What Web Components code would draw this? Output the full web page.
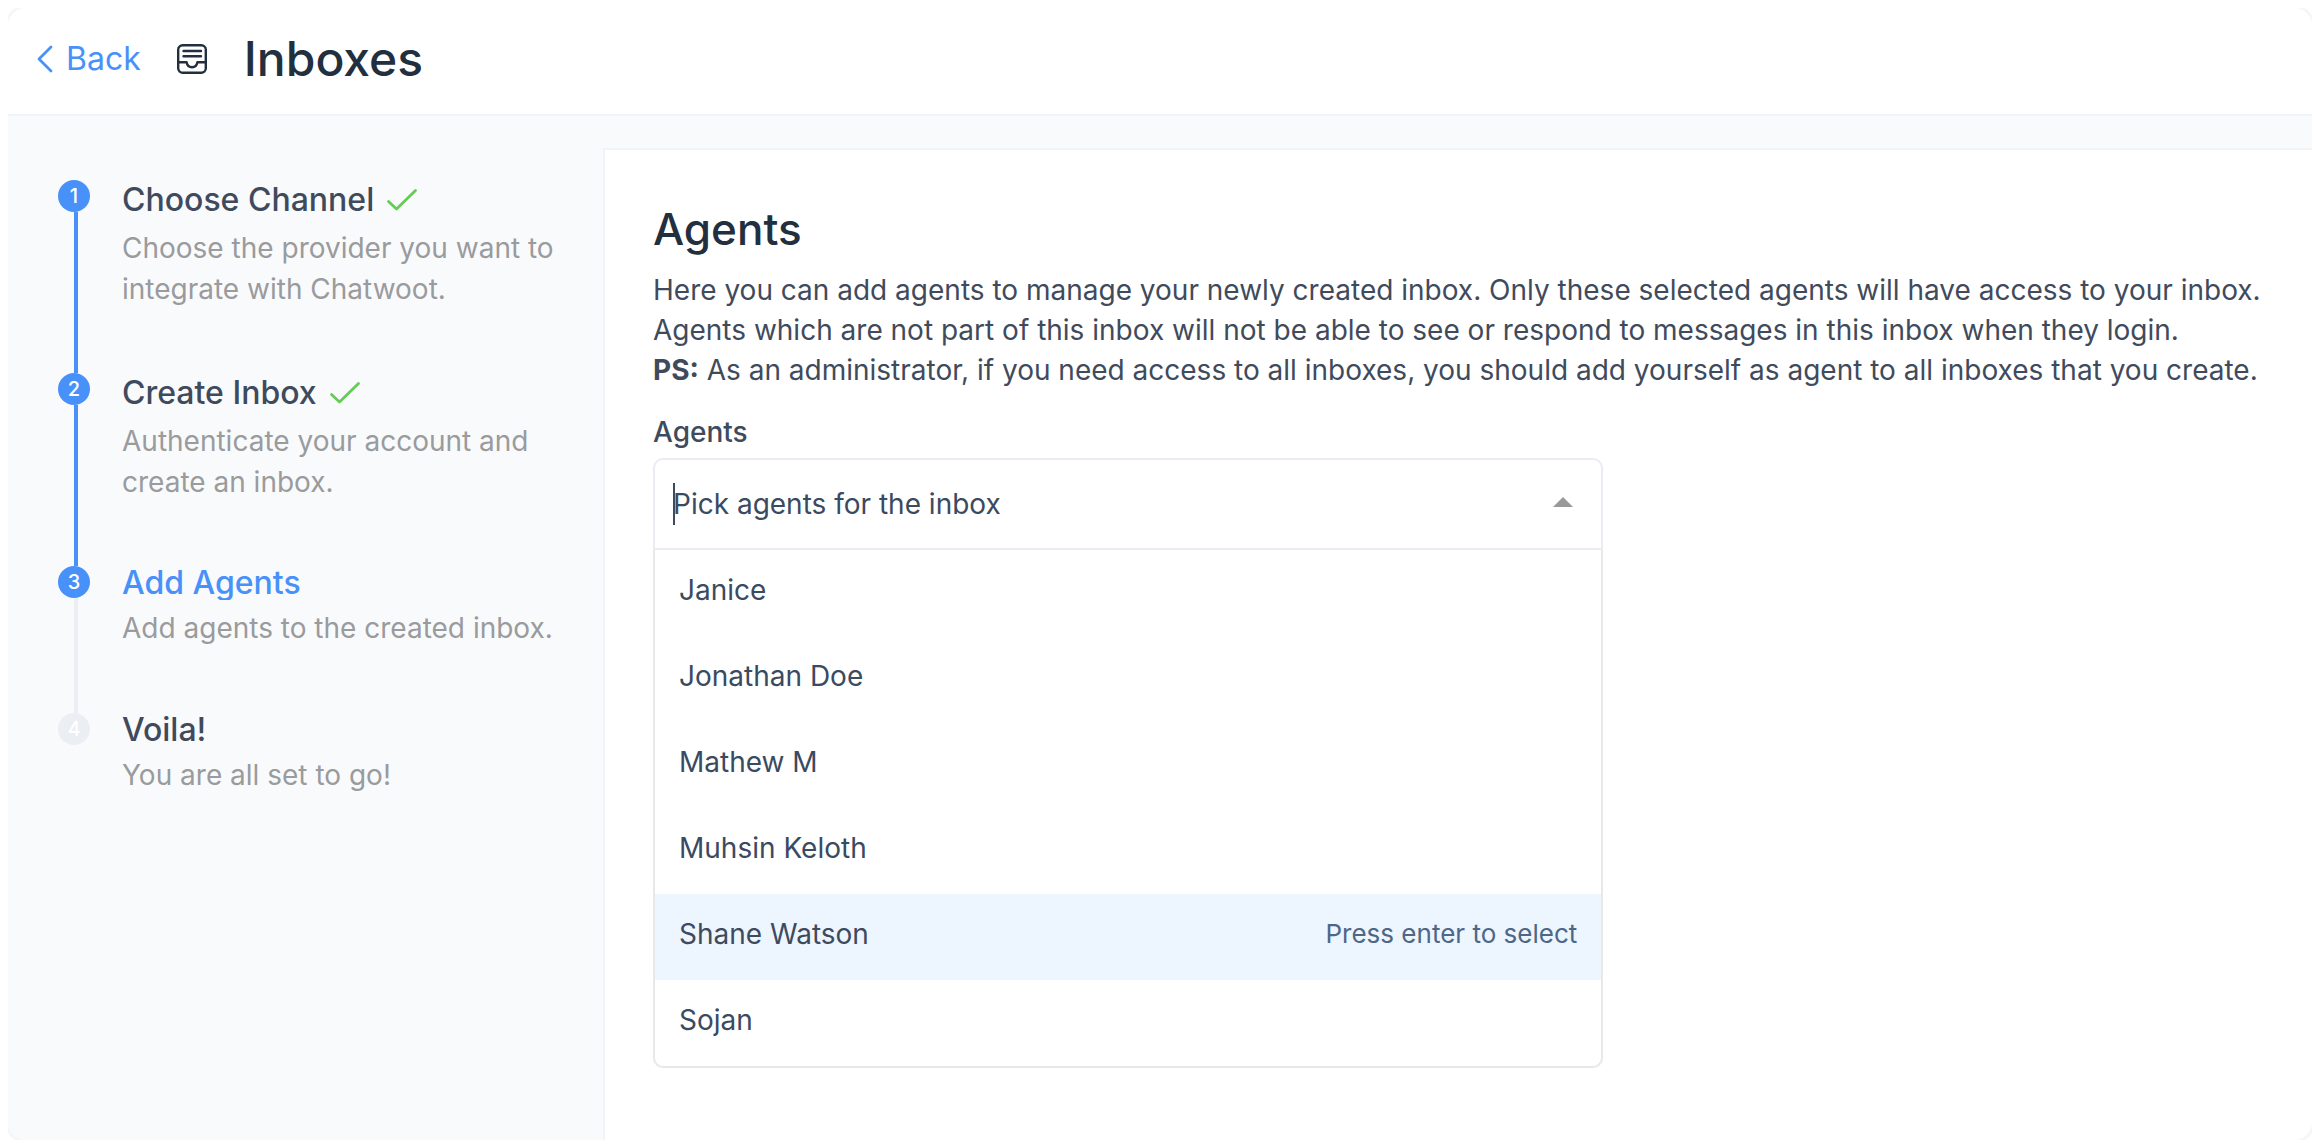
<!DOCTYPE html>
<html lang="en">
<head>
  <meta charset="UTF-8">
  <meta name="viewport" content="width=device-width, initial-scale=1.0">
  <title>Inboxes</title>
  <style>
    :root {
      --blue: #4891f9;
      --green: #66cc58;
      --heading: #222f3e;
      --text: #3f4b5c;
      --option: #3a4a60;
      --muted: #999b9d;
      --line: #f0f3f7;
      --field: #e9edf3;
      --surface: #f9fafc;
    }
    body {
      margin: 8px;
      background: #fff;
      color: var(--text);
      font: 28px/40px Inter, "Liberation Sans", sans-serif;
    }
  </style>
</head>
<body>
  <inbox-page>
    <page-header slot="header" titulo="Inboxes"></page-header>
    <wizard-steps slot="steps"></wizard-steps>
    <agents-panel>
      <span slot="title">Agents</span>
      <span slot="text">Here you can add agents to manage your newly created inbox. Only these selected agents will have access to your inbox. Agents which are not part of this inbox will not be able to see or respond to messages in this inbox when they login.<br><b>PS:</b> As an administrator, if you need access to all inboxes, you should add yourself as agent to all inboxes that you create.</span>
      <agent-picker label="Agents" placeholder="Pick agents for the inbox"></agent-picker>
    </agents-panel>
  </inbox-page>

  <script>
    class InboxPage extends HTMLElement {
      constructor() {
        super();
        this.attachShadow({ mode: "open" }).innerHTML = `
          <style>
            :host {
              display: flex;
              flex-direction: column;
              box-sizing: border-box;
              min-height: calc(100vh - 16px);
              border-radius: 18px;
              overflow: hidden;
              background: var(--surface);
              box-shadow: 0 0 1px 3px #f6f6f6;
            }
            .body {
              flex: 1;
              display: grid;
              grid-template-columns: 595px minmax(0, 1fr);
            }
            main {
              display: flex;
              margin-top: 32px;
            }
            ::slotted(agents-panel) {
              flex: 1;
            }
          </style>
          <slot name="header"></slot>
          <div class="body">
            <slot name="steps"></slot>
            <main><slot></slot></main>
          </div>
        `;
      }
    }

    class PageHeader extends HTMLElement {
      constructor() {
        super();
        this.attachShadow({ mode: "open" });
      }

      get titulo() {
        return this.getAttribute("titulo");
      }

      connectedCallback() {
        this.shadowRoot.innerHTML = `
          <style>
            :host {
              display: flex;
              align-items: center;
              box-sizing: border-box;
              min-height: 108px;
              padding: 0 24px 4px 28px;
              background: #fff;
              border-bottom: 2px solid var(--line);
            }
            a {
              display: flex;
              align-items: center;
              gap: 12px;
              color: var(--blue);
              font-size: 32px;
              line-height: 42px;
              text-decoration: none;
            }
            svg {
              display: block;
              fill: none;
              stroke: currentColor;
              stroke-linecap: round;
              stroke-linejoin: round;
            }
            .inbox {
              margin: 0 37px 0 36px;
              color: var(--heading);
            }
            h1 {
              margin: 0;
              color: var(--heading);
              font-size: 48px;
              line-height: 60px;
              font-weight: 500;
            }
          </style>
          <a href="#">
            <svg width="18" height="28" viewBox="0 0 18 28" stroke-width="2.8"><path d="M15 2 L3 14 L15 26"/></svg>
            Back
          </a>
          <svg class="inbox" width="30" height="30" viewBox="0 0 30 30" stroke-width="2.4">
            <rect x="1.2" y="1.2" width="27.6" height="27.6" rx="4.5"/>
            <path d="M6.5 7 H24 M6.5 12.2 H24"/>
            <path d="M1.2 18.2 H9.6 C10.2 21.6 12.2 23.2 15 23.2 S19.8 21.6 20.4 18.2 H28.8"/>
          </svg>
          <h1>${this.titulo}</h1>
        `;
      }
    }

    class WizardStep extends HTMLElement {
      constructor() {
        super();
        this.attachShadow({ mode: "open" });
      }

      connectedCallback() {
        const check = this.hasAttribute("done")
          ? `<svg width="32" height="24" viewBox="0 0 32 24" aria-label="done"><path d="M2.5 13.5 L10.5 21 L29.5 2.5"/></svg>`
          : "";
        this.shadowRoot.innerHTML = `
          <style>
            :host {
              display: grid;
              grid-template-columns: 32px minmax(0, 1fr);
              column-gap: 32px;
            }
            .rail {
              display: flex;
              flex-direction: column;
            }
            .badge {
              width: 32px;
              height: 32px;
              border-radius: 50%;
              background: var(--blue);
              color: #fff;
              font-size: 20px;
              font-weight: 500;
              line-height: 32px;
              text-align: center;
            }
            .rail::after {
              content: "";
              flex: 1;
              width: 4px;
              margin-left: 16px;
              background: var(--blue);
            }
            :host([active]) .rail::after, :host([pending]) .badge {
              background: #ebeef3;
            }
            :host([pending]) .rail::after {
              display: none;
            }
            .info {
              padding-bottom: 64px;
            }
            :host([done]) .info {
              padding-bottom: 63px;
            }
            h3 {
              display: flex;
              align-items: center;
              gap: 12px;
              margin: 0 0 8px;
              color: var(--text);
              font-size: 32px;
              line-height: 34px;
              font-weight: 500;
            }
            :host([done]) h3 {
              line-height: 40px;
            }
            :host([active]) h3 {
              overflow: hidden;
              color: var(--blue);
            }
            p {
              margin: 0;
              color: var(--muted);
              line-height: 41px;
            }
            path {
              fill: none;
              stroke: var(--green);
              stroke-width: 2.8;
              stroke-linecap: round;
              stroke-linejoin: round;
            }
          </style>
          <div class="rail"><span class="badge">${this.getAttribute("number")}</span></div>
          <div class="info">
            <h3>${this.getAttribute("name")}${check}</h3>
            <p><slot></slot></p>
          </div>
        `;
      }
    }

    class WizardSteps extends HTMLElement {
      constructor() {
        super();
        this.attachShadow({ mode: "open" });
      }

      connectedCallback() {
        const steps = [
          { name: "Choose Channel", text: "Choose the provider you want to integrate with Chatwoot.", state: "done" },
          { name: "Create Inbox", text: "Authenticate your account and create an inbox.", state: "done" },
          { name: "Add Agents", text: "Add agents to the created inbox.", state: "active" },
          { name: "Voila!", text: "You are all set to go!", state: "pending" }
        ];
        this.shadowRoot.innerHTML = `
          <style>
            :host {
              display: block;
              padding: 64px 32px 0 50px;
            }
          </style>
          ${steps.map((step, i) => `
            <wizard-step number="${i + 1}" name="${step.name}" ${step.state}>${step.text}</wizard-step>
          `).join("")}
        `;
      }
    }

    class AgentsPanel extends HTMLElement {
      constructor() {
        super();
        this.attachShadow({ mode: "open" }).innerHTML = `
          <style>
            :host {
              display: block;
              box-sizing: border-box;
              padding: 48px 30px 48px 48px;
              background: #fff;
              border: solid var(--line);
              border-width: 2px 0 0 2px;
            }
            h2 {
              margin: 0 0 10px;
              color: var(--heading);
              font-size: 44px;
              line-height: 62px;
              font-weight: 500;
            }
            p {
              margin: 0 0 22px;
            }
          </style>
          <h2><slot name="title"></slot></h2>
          <p><slot name="text"></slot></p>
          <slot></slot>
        `;
      }
    }

    class AgentPicker extends HTMLElement {
      constructor() {
        super();
        this.attachShadow({ mode: "open" });
        this.agents = ["Janice", "Jonathan Doe", "Mathew M", "Muhsin Keloth", "Shane Watson", "Sojan"];
        this.current = "Shane Watson";
      }

      connectedCallback() {
        this.shadowRoot.innerHTML = `
          <style>
            :host {
              display: block;
              width: calc(100% * 7 / 12);
            }
            label {
              display: block;
              margin-bottom: 6px;
              font-weight: 500;
            }
            .field {
              position: relative;
              display: flex;
              align-items: center;
              box-sizing: border-box;
              height: 92px;
              padding: 0 24px 0 18px;
              border: 2px solid var(--field);
              border-radius: 10px 10px 0 0;
              background: #fff;
            }
            input {
              flex: 1;
              min-width: 0;
              height: 42px;
              padding: 0;
              border: 0;
              outline: 0;
              background: none;
              color: var(--option);
              font: inherit;
            }
            input::placeholder {
              color: var(--option);
              opacity: 1;
            }
            /* text cursor in the open field */
            .caret {
              position: absolute;
              left: 18px;
              top: 23px;
              width: 2px;
              height: 42px;
              background: var(--option);
            }
            button {
              padding: 4px 4px 8px;
              border: 0;
              background: none;
            }
            svg {
              display: block;
              fill: #999;
            }
            ul {
              margin: 0;
              padding: 0;
              list-style: none;
              border: 2px solid #e8e8e8;
              border-top: 0;
              border-radius: 0 0 10px 10px;
              overflow: hidden;
              background: #fff;
            }
            li {
              display: flex;
              justify-content: space-between;
              padding: 24px 24px 30px;
              color: var(--option);
              line-height: 32px;
            }
            li[aria-selected="true"] {
              background: #edf5ff;
              color: var(--text);
            }
            small {
              color: #4c6787;
              font-size: 26px;
            }
          </style>
          <label for="agents">${this.getAttribute("label")}</label>
          <div class="field">
            <input id="agents" type="text" role="combobox" aria-expanded="true" aria-controls="list" autocomplete="off" placeholder="${this.getAttribute("placeholder")}">
            <span class="caret"></span>
            <button type="button" aria-label="Close list"><svg width="20" height="10" viewBox="0 0 20 10"><path d="M0 10 L10 0 L20 10 Z"/></svg></button>
          </div>
          <ul id="list" role="listbox">
            ${this.agents.map((agent) => `
              <li role="option" aria-selected="${agent === this.current}">${agent}${agent === this.current ? "<small>Press enter to select</small>" : ""}</li>
            `).join("")}
          </ul>
        `;
      }
    }

    customElements.define("inbox-page", InboxPage);
    customElements.define("page-header", PageHeader);
    customElements.define("wizard-step", WizardStep);
    customElements.define("wizard-steps", WizardSteps);
    customElements.define("agents-panel", AgentsPanel);
    customElements.define("agent-picker", AgentPicker);
  </script>
</body>
</html>
